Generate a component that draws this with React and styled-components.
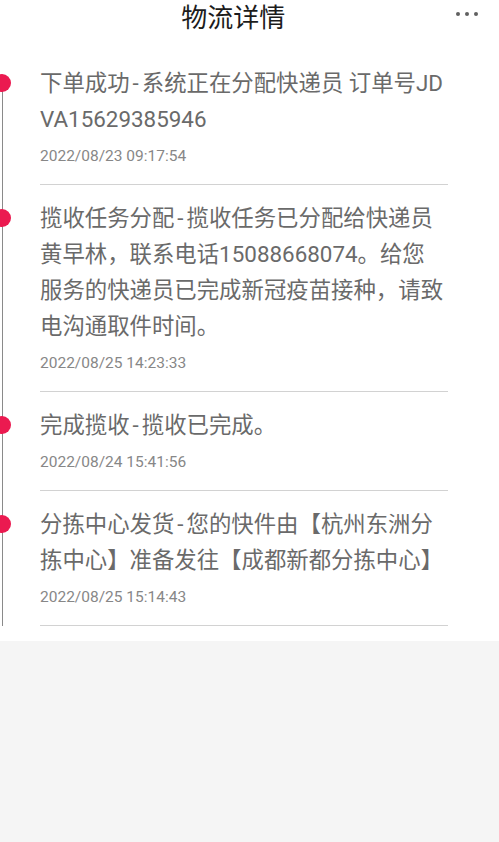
import styled, { createGlobalStyle } from "styled-components";

const GlobalStyle = createGlobalStyle`
	body {
		margin: 0;
		background: #f5f5f5;
		font-family: "Roboto", "Noto Sans CJK SC", sans-serif;
	}
`;

// line breaks follow the app's wrapping of the long message
const tracks = [
	{
		title: "下单成功",
		desc: "系统正在分配快递员 订单号JDVA15629385946",
		time: "2022/08/23 09:17:54",
	},
	{
		title: "揽收任务分配",
		desc: "揽收任务已分配给快递员黄早林，联系电话15088668074。给您\n服务的快递员已完成新冠疫苗接种，请致电沟通取件时间。",
		time: "2022/08/25 14:23:33",
	},
	{
		title: "完成揽收",
		desc: "揽收已完成。",
		time: "2022/08/24 15:41:56",
	},
	{
		title: "分拣中心发货",
		desc: "您的快件由【杭州东洲分拣中心】准备发往【成都新都分拣中心】",
		time: "2022/08/25 15:14:43",
	},
];

export default function App() {
	return (
		<>
			<GlobalStyle />
			<Page>
				<Header>
					<Title>物流详情</Title>
					<More aria-label="更多">
						<Dot />
						<Dot />
						<Dot />
					</More>
				</Header>
				<Timeline>
					{tracks.map((t, i) => (
						<Item key={i} $first={i === 0}>
							<Text>
								{t.title}
								<Sep>-</Sep>
								{t.desc}
							</Text>
							<Time>{t.time}</Time>
						</Item>
					))}
				</Timeline>
			</Page>
		</>
	);
}

const Page = styled.div`
	width: 499px;
	background: #fff;
	padding-bottom: 15px;
`;

const Header = styled.header`
	height: 32px;
	display: flex;
	align-items: center;
	padding-right: 21px;
`;

const Title = styled.h1`
	flex: 1;
	margin: 0;
	padding-left: 11px;
	text-align: center;
	font-family: "Noto Sans CJK SC", sans-serif;
	font-size: 26px;
	font-weight: 400;
	line-height: 32px;
	color: #1c1c1c;
`;

const More = styled.div`
	display: flex;
	gap: 4.5px;
	align-items: center;
	height: 32px;
	margin-top: -4px;
`;

const Dot = styled.span`
	width: 4.5px;
	height: 4.5px;
	border-radius: 50%;
	background: #606060;
`;

const Timeline = styled.ul`
	list-style: none;
	margin: 0;
	padding: 18px 0 0 40px;
`;

const Item = styled.li`
	position: relative;
	width: 408px;
	padding: 15px 0 18px;
	border-bottom: 1px solid #d2d2d2;

	&::before {
		content: "";
		position: absolute;
		left: -47px;
		top: 24px;
		width: 18px;
		height: 18px;
		border-radius: 50%;
		background: #eb1a50;
		z-index: 1;
	}

	&::after {
		content: "";
		position: absolute;
		left: -38px;
		top: ${(p) => (p.$first ? "33px" : "0")};
		bottom: -1px;
		width: 1px;
		background: #8a8a8a;
	}
`;

const Text = styled.p`
	margin: 0;
	font-size: 22.4px;
	line-height: 36px;
	color: #6a6a6a;
	white-space: pre-line;
	word-break: break-all;
`;

const Sep = styled.span`
	margin: 0 3px;
`;

const Time = styled.div`
	margin-top: 9px;
	font-family: "Roboto", sans-serif;
	font-size: 15.5px;
	line-height: 20px;
	color: #878787;
`;
